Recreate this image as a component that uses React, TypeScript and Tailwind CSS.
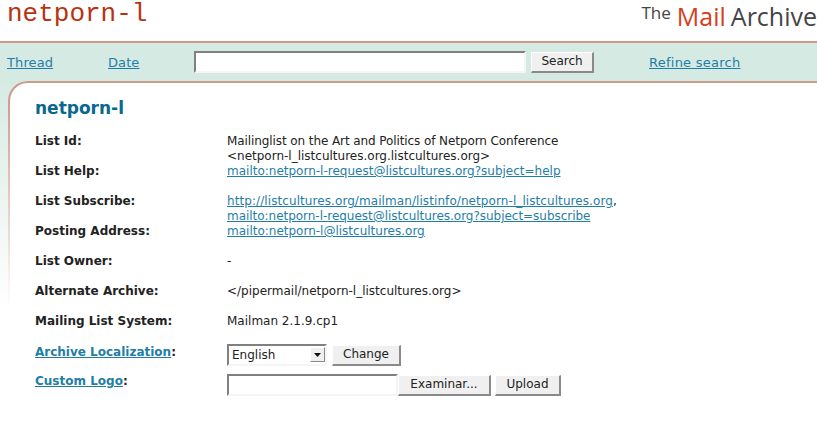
const font = "font-['DejaVu_Sans','Liberation_Sans',sans-serif]";

const rows: { label: string; value: React.ReactNode }[] = [
  {
    label: "List Id",
    value: (
      <>
        <div className="tracking-[-0.09px]">Mailinglist on the Art and Politics of Netporn Conference</div>
        <div>&lt;netporn-l_listcultures.org.listcultures.org&gt;</div>
      </>
    ),
  },
  { label: "List Help", value: <A>mailto:netporn-l-request@listcultures.org?subject=help</A> },
  {
    label: "List Subscribe",
    value: (
      <>
        <div>
          <A className="tracking-[0.08px]">http://listcultures.org/mailman/listinfo/netporn-l_listcultures.org</A>,
        </div>
        <A className="tracking-[-0.03px]">mailto:netporn-l-request@listcultures.org?subject=subscribe</A>
      </>
    ),
  },
  { label: "Posting Address", value: <A>mailto:netporn-l@listcultures.org</A> },
  { label: "List Owner", value: "-" },
  { label: "Alternate Archive", value: "</pipermail/netporn-l_listcultures.org>" },
  { label: "Mailing List System", value: "Mailman 2.1.9.cp1" },
];

function A({ children, className = "" }: { children: React.ReactNode; className?: string }) {
  return <a className={`text-[#1f7ea6] underline ${className}`}>{children}</a>;
}

function Btn({ children, className = "" }: { children: React.ReactNode; className?: string }) {
  return (
    <button className={`h-[21px] border border-t-white border-l-white border-r-[#8a8a8a] border-b-[#8a8a8a] border-r-2 border-b-2 bg-[#f0f0f0] text-[12px] text-[#222] ${className}`}>
      {children}
    </button>
  );
}

const sunken = "h-[22px] border-2 border-t-[#808080] border-l-[#808080] border-r-[#f5f5f5] border-b-[#f5f5f5] bg-white";

export default function App() {
  return (
    <div className={`h-[431px] w-[817px] overflow-hidden bg-white text-[12px] leading-[15px] text-[#222] ${font}`}>
      <header className="flex h-[41px] items-start justify-between">
        <div className="ml-[7px] font-['Liberation_Mono',monospace] text-[26px] leading-[28px] text-[#b8320f]">netporn-l</div>
        <div className="flex items-baseline whitespace-nowrap font-['Open_Sans',sans-serif] text-[25px] leading-[32px] text-[#444]">
          <span className="relative top-[-7px] mr-[6px] text-[17px]">The</span>
          <span className="mr-[5px] text-[#d5401a]">Mail</span>
          <span>Archive</span>
        </div>
      </header>
      <nav className="flex h-[40px] items-center border-t-2 border-[#cf9a8c] bg-[#d6eae4] text-[13px]">
        <a className="ml-[7px] w-[101px] tracking-[0.1px] text-[#1f7ea6] underline">Thread</a>
        <a className="w-[86px] tracking-[0.1px] text-[#1f7ea6] underline">Date</a>
        <input className={`${sunken} w-[332px]`} />
        <Btn className="ml-[5px] w-[63px]">Search</Btn>
        <a className="ml-[55px] tracking-[0.25px] text-[#1f7ea6] underline">Refine search</a>
      </nav>
      <div className="h-[350px] bg-linear-to-b from-[#d6eae4] to-white to-[65%]">
        <div className="ml-[8px] h-full rounded-tl-[20px] bg-linear-to-b from-[#cf9a8c] from-[5%] to-white to-[65%] pt-[2px] pl-[2px]">
          <main className="h-full rounded-tl-[18px] bg-white pl-[25px]">
            <h1 className="pt-[13px] pb-[14px] text-[17px] font-bold leading-[24px] text-[#0b6690]">netporn-l</h1>
            {rows.map((r) => (
              <div key={r.label} className="grid min-h-[30px] grid-cols-[192px_1fr] items-start">
                <b>{r.label}:</b>
                <div>{r.value}</div>
              </div>
            ))}
            <div className="grid h-[30px] grid-cols-[192px_1fr] items-start">
              <b className="pt-[1px]">
                <A>Archive Localization</A>:
              </b>
              <div className="flex items-center gap-[5px]">
                <div className="relative">
                  <select className={`${sunken} w-[100px] appearance-none pl-[3px] text-[12px]`}>
                    <option>English</option>
                  </select>
                  <div className="absolute right-[2px] top-[3px] flex h-[15px] w-[15px] items-center justify-center border border-t-white border-l-white border-r-[#8a8a8a] border-b-[#8a8a8a] bg-[#f0f0f0]">
                    <svg width="7" height="4" viewBox="0 0 7 4">
                      <path d="M0 0h7L3.5 4z" fill="#111" />
                    </svg>
                  </div>
                </div>
                <Btn className="w-[69px]">Change</Btn>
              </div>
            </div>
            <div className="grid h-[30px] grid-cols-[192px_1fr] items-start">
              <b>
                <A>Custom Logo</A>:
              </b>
              <div className="flex items-center">
                <input className={`${sunken} w-[171px]`} />
                <Btn className="w-[93px]">Examinar...</Btn>
                <Btn className="ml-[4px] w-[66px]">Upload</Btn>
              </div>
            </div>
          </main>
        </div>
      </div>
    </div>
  );
}
